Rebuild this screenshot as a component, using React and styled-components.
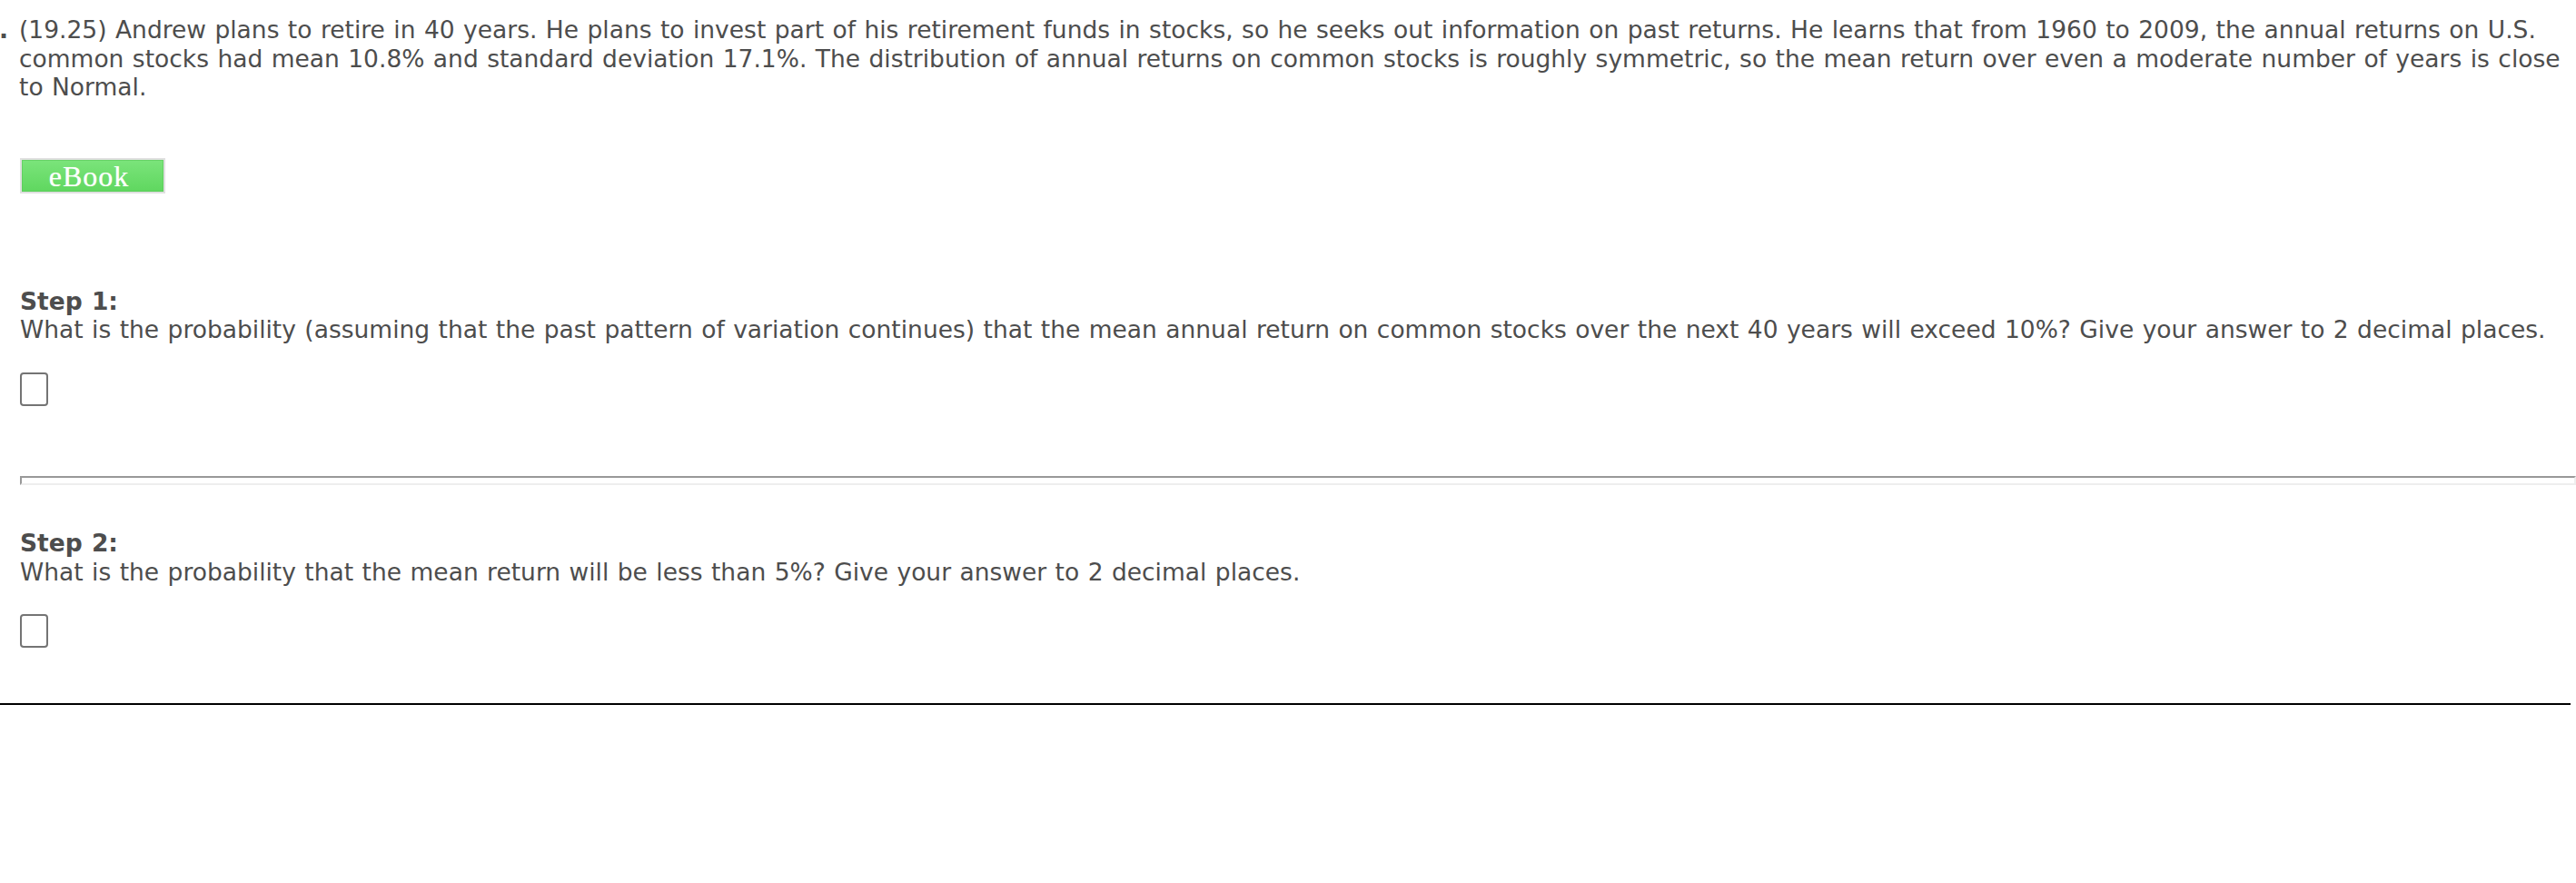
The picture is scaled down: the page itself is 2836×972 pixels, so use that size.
import React from "react";
import styled, {createGlobalStyle} from "styled-components";

const GlobalStyle = createGlobalStyle`
    body {
        margin: 0;
        background: #fff;
        font-family: "DejaVu Sans", Verdana, sans-serif;
        color: #4d4d4d;
    }
`;

const Page = styled.div`
    padding: 17px 0 0 22px;
    font-size: 26.5px;
    line-height: 31.6px;
    word-spacing: 1px;
`;

const Prompt = styled.div`
    display: flex;
`;

const Marker = styled.span`
    flex: 0 0 22px;
    margin-left: -23px;
    font-weight: bold;
`;

const EbookButton = styled.button`
    display: flex;
    align-items: center;
    justify-content: center;
    width: 160px;
    height: 39px;
    margin-top: 62px;
    padding: 2px 8px 0 0;
    border: 2px solid #e0e0e0;
    border-radius: 0;
    background: linear-gradient(#7be47b, #5fd75f);
    box-shadow: inset 0 0 0 1px rgba(90, 200, 90, 0.6);
    color: #fff;
    font-family: "Liberation Serif", "Times New Roman", serif;
    font-size: 32px;
    letter-spacing: 1px;
    line-height: 1;
    text-shadow: 0 0 1px rgba(255, 255, 255, 0.6);
    cursor: pointer;
`;

const Step = styled.section`
    margin-top: ${props => props.gap}px;
    margin-right: 6px;
`;

const StepTitle = styled.div`
    font-weight: bold;
`;

const AnswerInput = styled.input`
    display: block;
    box-sizing: border-box;
    width: 31px;
    height: 37px;
    margin-top: 31px;
    padding: 0;
    border: 2px solid #747474;
    border-radius: 4px;
    background: #fff;
    outline: none;
`;

const Divider = styled.hr`
    box-sizing: border-box;
    height: 10px;
    margin: 77px 0 0;
    border: 2px solid;
    border-color: #999 #eee #eee #999;
`;

const BottomRule = styled.div`
    height: 2px;
    margin: 61px 6px 0 -22px;
    background: #000;
`;

const App = () => {
    return (
        <>
            <GlobalStyle/>
            <Page>
                <Prompt>
                    <Marker>.</Marker>
                    <span>
                        (19.25) Andrew plans to retire in 40 years. He plans to invest part of his retirement funds in stocks, so he seeks out information on past returns. He learns that from 1960 to 2009, the annual returns on U.S. common stocks had mean 10.8% and standard deviation 17.1%. The distribution of annual returns on common stocks is roughly symmetric, so the mean return over even a moderate number of years is close to Normal.
                    </span>
                </Prompt>
                <EbookButton type="button">eBook</EbookButton>

                <Step gap={103}>
                    <StepTitle>Step 1:</StepTitle>
                    <div>What is the probability (assuming that the past pattern of variation continues) that the mean annual return on common stocks over the next 40 years will exceed 10%? Give your answer to 2 decimal places.</div>
                    <AnswerInput type="text"/>
                </Step>

                <Divider/>

                <Step gap={48}>
                    <StepTitle>Step 2:</StepTitle>
                    <div>What is the probability that the mean return will be less than 5%? Give your answer to 2 decimal places.</div>
                    <AnswerInput type="text"/>
                </Step>

                <BottomRule/>
            </Page>
        </>
    )
}

export default App;
